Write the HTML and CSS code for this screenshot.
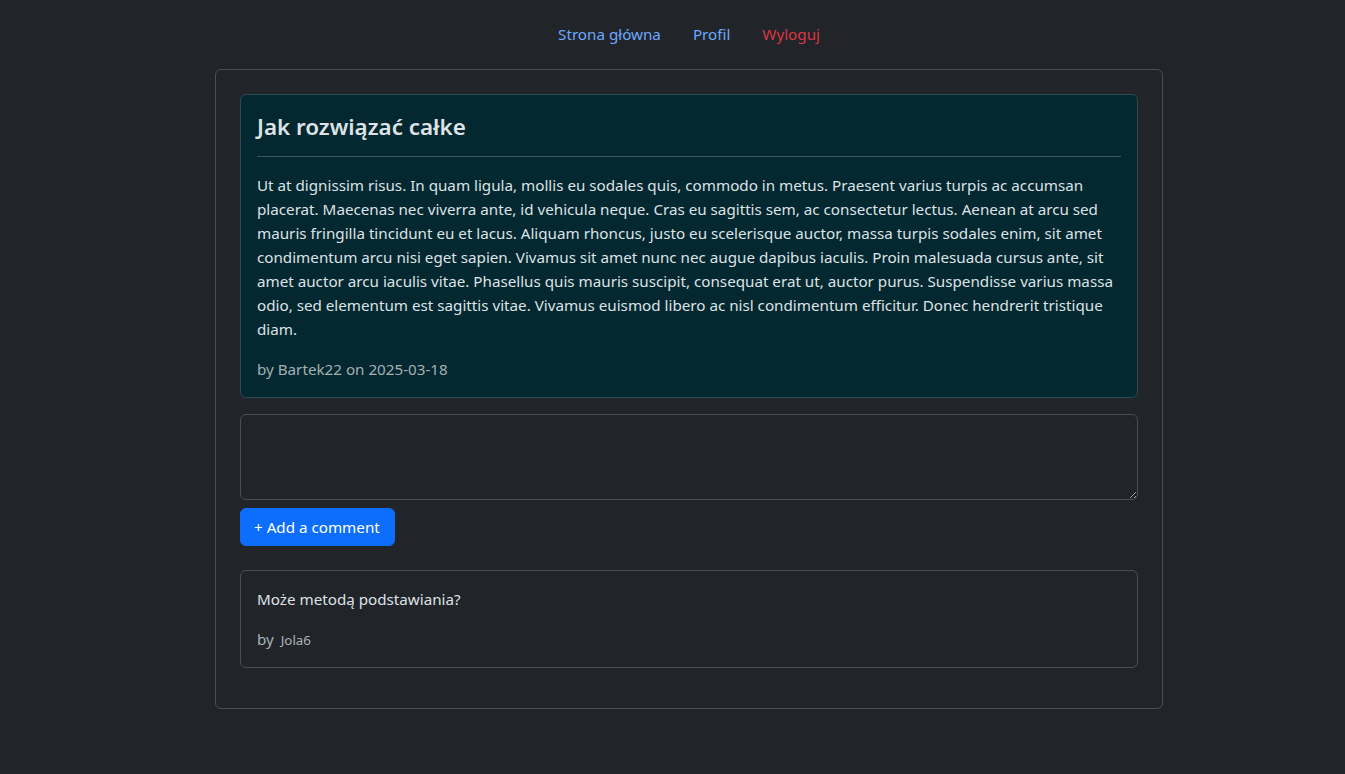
FILE: index.html
```html
<!DOCTYPE html>
<html lang="pl">
<head>
<meta charset="utf-8">
<title>Jak rozwiązać całke</title>
<link rel="stylesheet" href="styles.css">
</head>
<body>
<div class="page">
  <nav class="nav">
    <a class="nav-link" href="#">Strona główna</a>
    <a class="nav-link" href="#">Profil</a>
    <a class="nav-link danger" href="#">Wyloguj</a>
  </nav>
  <main class="panel">
    <article class="post">
      <h2 class="post-title">Jak rozwiązać całke</h2>
      <hr class="divider">
      <p class="post-text">Ut at dignissim risus. In quam ligula, mollis eu sodales quis, commodo in metus. Praesent varius turpis ac accumsan placerat. Maecenas nec viverra ante, id vehicula neque. Cras eu sagittis sem, ac consectetur lectus. Aenean at arcu sed mauris fringilla tincidunt eu et lacus. Aliquam rhoncus, justo eu scelerisque auctor, massa turpis sodales enim, sit amet condimentum arcu nisi eget sapien. Vivamus sit amet nunc nec augue dapibus iaculis. Proin malesuada cursus ante, sit amet auctor arcu iaculis vitae. Phasellus quis mauris suscipit, consequat erat ut, auctor purus. Suspendisse varius massa odio, sed elementum est sagittis vitae. Vivamus euismod libero ac nisl condimentum efficitur. Donec hendrerit tristique diam.</p>
      <p class="meta">by Bartek22 on 2025-03-18</p>
    </article>
    <form class="comment-form">
      <textarea class="comment-input"></textarea>
      <button class="btn-primary" type="button">+ Add a comment</button>
    </form>
    <div class="comment">
      <p class="comment-text">Może metodą podstawiania?</p>
      <p class="meta">by <small class="author">Jola6</small></p>
    </div>
  </main>
</div>
</body>
</html>
```
FILE: styles.css
```css
* { box-sizing: border-box; }
html, body { margin: 0; }
body {
  background: #212529;
  color: #dee2e6;
  font-family: "Noto Sans", "Open Sans", sans-serif;
  font-size: 15.2px;
  line-height: 24px;
}
.page {
  padding-left: 33px;
}
.nav {
  display: flex;
  justify-content: center;
  padding-top: 14px;
  margin-bottom: 15px;
}
.nav-link {
  padding: 8px 16px;
  color: #6ea8fe;
  text-decoration: none;
}
.nav-link.danger { color: #dc3545; }
.panel {
  width: 948px;
  margin: 0 auto;
  border: 1px solid #4a4f55;
  border-radius: 6px;
  padding: 24px;
}
.post {
  background: #032830;
  border: 1px solid #2c4a4f;
  border-radius: 6px;
  padding: 16px;
}
.post-title {
  margin: 0;
  font-size: 22.4px;
  font-weight: 600;
  line-height: 32px;
}
.divider {
  margin: 13px 0 16px;
  height: 0;
  border: 0;
  border-top: 1px solid #3f585d;
}
.post-text {
  margin: 0 0 16px;
}
.meta {
  margin: 0;
  color: #a9b2b8;
}
.post .meta { color: #a3b0b3; }
.comment-form {
  display: flex;
  flex-direction: column;
  align-items: flex-start;
  gap: 8px;
  margin-top: 16px;
}
.comment-input {
  display: block;
  width: 100%;
  height: 86px;
  background: #212529;
  color: #dee2e6;
  border: 1px solid #4a4f55;
  border-radius: 6px;
  padding: 6px 12px;
  font: inherit;
  resize: vertical;
}
.btn-primary {
  background: #0d6efd;
  color: #fff;
  border: 1px solid #0d6efd;
  border-radius: 6px;
  padding: 6px 14px 6px 13px;
  font: inherit;
  line-height: 24px;
  cursor: pointer;
}
.comment {
  margin-top: 24px;
  margin-bottom: 16px;
  border: 1px solid #4a4f55;
  border-radius: 6px;
  padding: 16px 16px 15px;
}
.comment-text {
  margin: 0 0 16px;
}
.author {
  font-size: 13.3px;
  margin-left: 3px;
}
```
